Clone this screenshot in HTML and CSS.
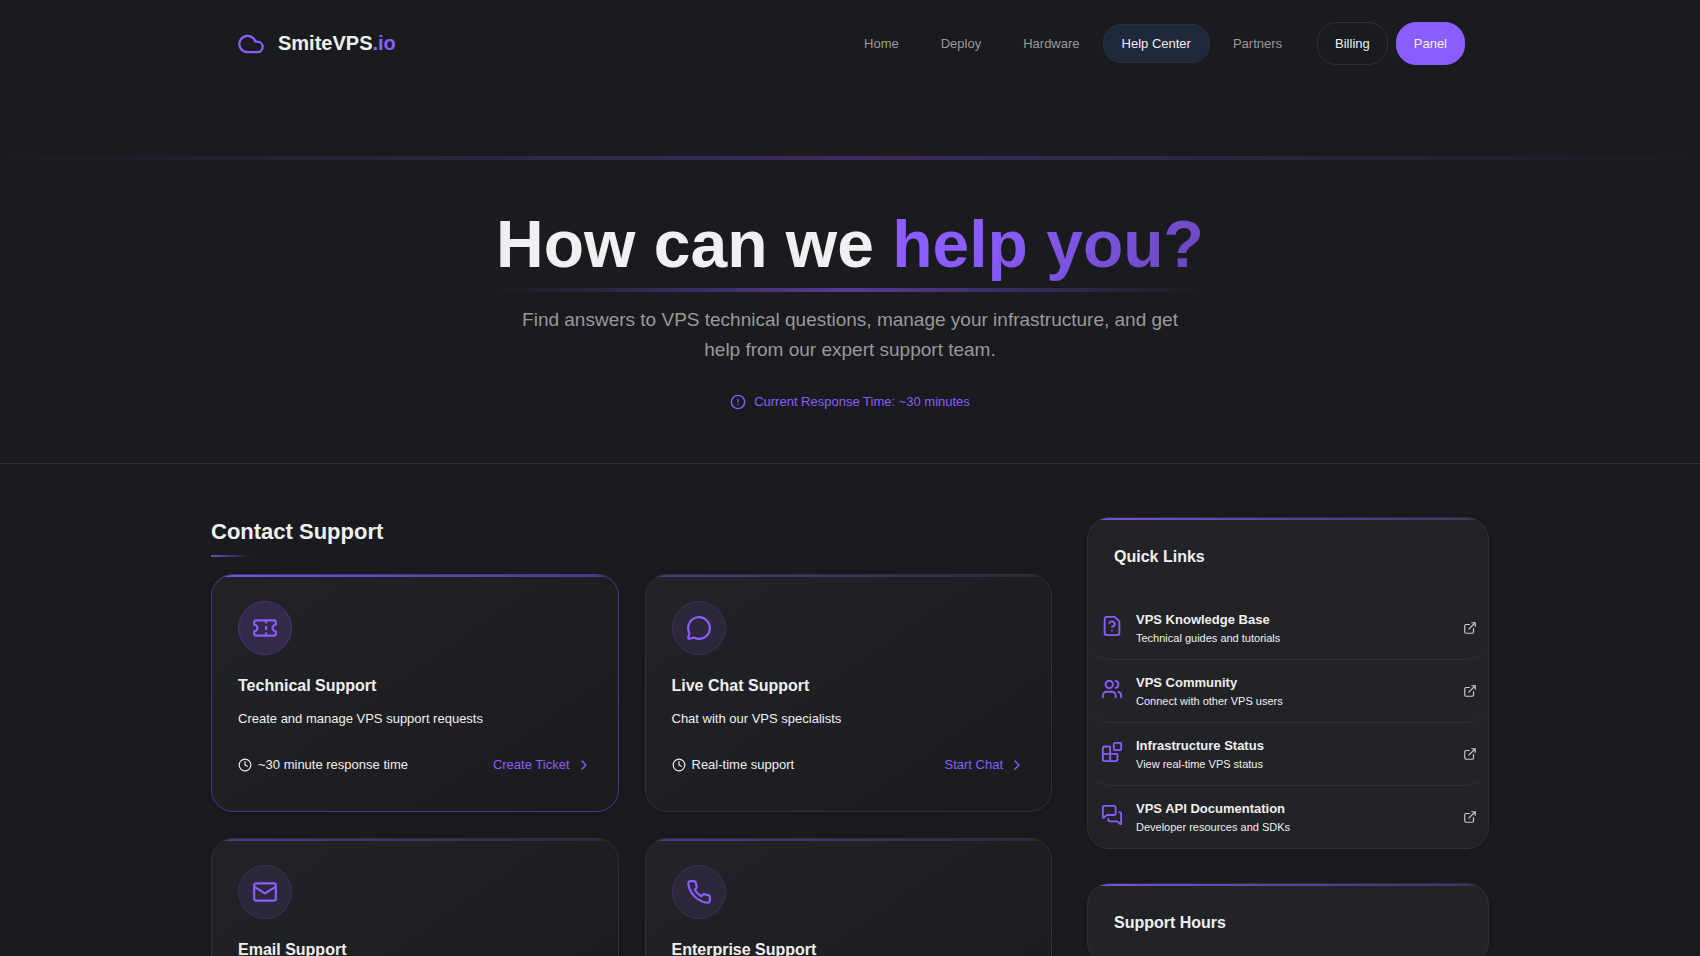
FILE: index.html
```html
<!DOCTYPE html>
<html lang="en">
<head>
    <meta charset="UTF-8">
    <meta name="viewport" content="width=device-width, initial-scale=1">
    <title>Help Center - SmiteVPS.io</title>
    <link rel="stylesheet" href="styles.css">
</head>
<body>
<header class="header">
    <div class="container header-inner">
        <a class="logo" href="#">
            <svg class="icon logo-icon" viewBox="0 0 24 24"><path d="M17.5 19H9a7 7 0 1 1 6.71-9h1.79a4.5 4.5 0 1 1 0 9Z"/></svg>
            <span>SmiteVPS<span class="accent">.io</span></span>
        </a>
        <nav class="nav">
            <a href="#">Home</a>
            <a href="#">Deploy</a>
            <a href="#">Hardware</a>
            <a class="active" href="#">Help Center</a>
            <a href="#">Partners</a>
        </nav>
        <div class="header-buttons">
            <a class="btn" href="#">Billing</a>
            <a class="btn btn-primary" href="#">Panel</a>
        </div>
    </div>
</header>

<section class="hero">
    <h1>How can we <span class="gradient-text">help you?</span></h1>
    <p class="hero-text">Find answers to VPS technical questions, manage your infrastructure, and get help from our expert support team.</p>
    <div class="response">
        <svg class="icon" viewBox="0 0 24 24"><circle cx="12" cy="12" r="10"/><path d="M12 8v4M12 16h.01"/></svg>
        <span>Current Response Time: ~30 minutes</span>
    </div>
</section>

<main class="container content">
    <section class="contact">
        <h2>Contact Support</h2>
        <div class="cards">
            <article class="card featured">
                <div class="card-icon">
                    <svg class="icon" viewBox="0 0 24 24"><path d="M2 9a3 3 0 0 1 0 6v2a2 2 0 0 0 2 2h16a2 2 0 0 0 2-2v-2a3 3 0 0 1 0-6V7a2 2 0 0 0-2-2H4a2 2 0 0 0-2 2ZM13 5v2M13 17v2M13 11v2"/></svg>
                </div>
                <h3>Technical Support</h3>
                <p>Create and manage VPS support requests</p>
                <div class="card-footer">
                    <span class="time">
                        <svg class="icon" viewBox="0 0 24 24"><circle cx="12" cy="12" r="10"/><path d="M12 6v6l4 2"/></svg>
                        ~30 minute response time
                    </span>
                    <a class="action" href="#">Create Ticket
                        <svg class="icon" viewBox="0 0 24 24"><path d="m9 18 6-6-6-6"/></svg>
                    </a>
                </div>
            </article>
            <article class="card">
                <div class="card-icon">
                    <svg class="icon" viewBox="0 0 24 24"><path d="M2.992 16.342a2 2 0 0 1 .094 1.167l-1.065 3.29a1 1 0 0 0 1.236 1.168l3.413-.998a2 2 0 0 1 1.099.092 10 10 0 1 0-4.777-4.719"/></svg>
                </div>
                <h3>Live Chat Support</h3>
                <p>Chat with our VPS specialists</p>
                <div class="card-footer">
                    <span class="time">
                        <svg class="icon" viewBox="0 0 24 24"><circle cx="12" cy="12" r="10"/><path d="M12 6v6l4 2"/></svg>
                        Real-time support
                    </span>
                    <a class="action" href="#">Start Chat
                        <svg class="icon" viewBox="0 0 24 24"><path d="m9 18 6-6-6-6"/></svg>
                    </a>
                </div>
            </article>
            <article class="card">
                <div class="card-icon">
                    <svg class="icon" viewBox="0 0 24 24"><rect x="2" y="4" width="20" height="16" rx="2"/><path d="m22 7-8.97 5.7a1.94 1.94 0 0 1-2.06 0L2 7"/></svg>
                </div>
                <h3>Email Support</h3>
            </article>
            <article class="card">
                <div class="card-icon">
                    <svg class="icon" viewBox="0 0 24 24"><path d="M22 16.92v3a2 2 0 0 1-2.18 2 19.79 19.79 0 0 1-8.63-3.07 19.5 19.5 0 0 1-6-6 19.79 19.79 0 0 1-3.07-8.67A2 2 0 0 1 4.11 2h3a2 2 0 0 1 2 1.72 12.84 12.84 0 0 0 .7 2.81 2 2 0 0 1-.45 2.11L8.09 9.91a16 16 0 0 0 6 6l1.27-1.27a2 2 0 0 1 2.11-.45 12.84 12.84 0 0 0 2.81.7A2 2 0 0 1 22 16.92z"/></svg>
                </div>
                <h3>Enterprise Support</h3>
            </article>
        </div>
    </section>

    <aside class="sidebar">
        <section class="panel">
            <h3>Quick Links</h3>
            <ul class="links">
                <li><a href="#">
                    <svg class="icon link-icon" viewBox="0 0 24 24"><path d="M15 2H6a2 2 0 0 0-2 2v16a2 2 0 0 0 2 2h12a2 2 0 0 0 2-2V7ZM9.1 9a3 3 0 0 1 5.82 1c0 2-3 3-3 3M12 17h.01"/></svg>
                    <span class="link-text"><strong>VPS Knowledge Base</strong><small>Technical guides and tutorials</small></span>
                    <svg class="icon external" viewBox="0 0 24 24"><path d="M15 3h6v6M10 14 21 3M18 13v6a2 2 0 0 1-2 2H5a2 2 0 0 1-2-2V8a2 2 0 0 1 2-2h6"/></svg>
                </a></li>
                <li><a href="#">
                    <svg class="icon link-icon" viewBox="0 0 24 24"><path d="M16 21v-2a4 4 0 0 0-4-4H6a4 4 0 0 0-4 4v2M22 21v-2a4 4 0 0 0-3-3.87M16 3.13a4 4 0 0 1 0 7.75"/><circle cx="9" cy="7" r="4"/></svg>
                    <span class="link-text"><strong>VPS Community</strong><small>Connect with other VPS users</small></span>
                    <svg class="icon external" viewBox="0 0 24 24"><path d="M15 3h6v6M10 14 21 3M18 13v6a2 2 0 0 1-2 2H5a2 2 0 0 1-2-2V8a2 2 0 0 1 2-2h6"/></svg>
                </a></li>
                <li><a href="#">
                    <svg class="icon link-icon" viewBox="0 0 24 24"><rect x="14" y="2" width="8" height="8" rx="1"/><path d="M10 22V7a1 1 0 0 0-1-1H4a2 2 0 0 0-2 2v12a2 2 0 0 0 2 2h12a2 2 0 0 0 2-2v-5a1 1 0 0 0-1-1H2"/></svg>
                    <span class="link-text"><strong>Infrastructure Status</strong><small>View real-time VPS status</small></span>
                    <svg class="icon external" viewBox="0 0 24 24"><path d="M15 3h6v6M10 14 21 3M18 13v6a2 2 0 0 1-2 2H5a2 2 0 0 1-2-2V8a2 2 0 0 1 2-2h6"/></svg>
                </a></li>
                <li><a href="#">
                    <svg class="icon link-icon" viewBox="0 0 24 24"><path d="M16 10a2 2 0 0 1-2 2H6.828a2 2 0 0 0-1.414.586l-2.202 2.202A.71.71 0 0 1 2 14.286V4a2 2 0 0 1 2-2h10a2 2 0 0 1 2 2zM20 9a2 2 0 0 1 2 2v10.286a.71.71 0 0 1-1.212.502l-2.202-2.202A2 2 0 0 0 17.172 19H10a2 2 0 0 1-2-2v-1"/></svg>
                    <span class="link-text"><strong>VPS API Documentation</strong><small>Developer resources and SDKs</small></span>
                    <svg class="icon external" viewBox="0 0 24 24"><path d="M15 3h6v6M10 14 21 3M18 13v6a2 2 0 0 1-2 2H5a2 2 0 0 1-2-2V8a2 2 0 0 1 2-2h6"/></svg>
                </a></li>
            </ul>
        </section>
        <section class="panel">
            <h3>Support Hours</h3>
        </section>
    </aside>
</main>
</body>
</html>
```
FILE: styles.css
```css
* {
    margin: 0;
    padding: 0;
    box-sizing: border-box;
}
html {
    scrollbar-width: none;
}
body {
    background: #1a1b1e;
    color: #f0f0f0;
    font-family: "Liberation Sans", Arial, sans-serif;
    font-size: 13px;
    line-height: 22px;
}
a {
    color: inherit;
    text-decoration: none;
}
ul {
    list-style: none;
}
.icon {
    width: 16px;
    height: 16px;
    flex: none;
    fill: none;
    stroke: currentColor;
    stroke-width: 2;
    stroke-linecap: round;
    stroke-linejoin: round;
}
.accent {
    color: #8b5cff;
}
.container {
    max-width: 1278px;
    margin: 0 auto;
}

/* header */
.header {
    height: 156px;
    padding-top: 22px;
    line-height: 21px;
}
.header-inner {
    display: flex;
    align-items: center;
    padding: 0 24px 0 26px;
}
.logo {
    display: flex;
    align-items: center;
    gap: 13px;
    margin-right: auto;
    font-size: 20px;
    font-weight: bold;
}
.logo-icon {
    width: 28px;
    height: 28px;
    color: #8b5cff;
}
.nav {
    display: flex;
    gap: 4px;
    color: #999;
}
.nav a {
    padding: 8px 18px;
    border: 1px solid transparent;
    border-radius: 18px;
}
.nav .active {
    background: #1e293b;
    border-color: #2e3036;
    color: #f0f0f0;
}
.header-buttons {
    display: flex;
    gap: 8px;
    margin-left: 16px;
}
.btn {
    padding: 10px 17px;
    border: 1px solid #2e3036;
    border-radius: 20px;
}
.btn-primary {
    background: #8b5cff;
    border-color: #8b5cff;
}

/* hero */
.hero {
    display: flex;
    flex-direction: column;
    align-items: center;
    padding-bottom: 50px;
    border-bottom: 1px solid #2e2f33;
    text-align: center;
}
.hero::before {
    content: "";
    width: 100%;
    height: 4px;
    margin-bottom: 44px;
    background: linear-gradient(90deg, transparent, #3c2c60, transparent);
}
.hero h1 {
    font-size: 66px;
    line-height: 80px;
}
.hero h1::after {
    content: "";
    display: block;
    height: 4px;
    margin-top: 4px;
    background: linear-gradient(90deg, transparent, #553c96, transparent);
}
.gradient-text {
    background: linear-gradient(135deg, #8b5cff 30%, #6845b8);
    -webkit-background-clip: text;
    background-clip: text;
    color: transparent;
}
.hero-text {
    max-width: 680px;
    margin: 13px 0 26px;
    color: #999;
    font-size: 19px;
    line-height: 30px;
}
.response {
    display: flex;
    align-items: center;
    gap: 8px;
    color: #8b5cff;
}

/* main content */
.content {
    display: grid;
    grid-template-columns: 1fr 402px;
    gap: 35px;
    padding: 53px 0;
}
.contact h2 {
    margin-bottom: 17px;
    font-size: 22px;
    line-height: 30px;
}
.contact h2::after {
    content: "";
    display: block;
    width: 40px;
    height: 2px;
    margin-top: 8px;
    background: linear-gradient(90deg, #6e4bc8, transparent);
}
.cards {
    display: grid;
    grid-template-columns: 1fr 1fr;
    gap: 26px;
}
.card,
.panel {
    position: relative;
    overflow: hidden;
    border: 1px solid #303136;
    border-radius: 22px;
    box-shadow: 0 2px 6px rgba(0, 0, 0, .2);
}
.card {
    min-height: 238px;
    padding: 26px;
    background: linear-gradient(145deg, #222326, #1a1b1e);
}
.card::before,
.panel::before {
    content: "";
    position: absolute;
    top: 0;
    left: 0;
    right: 0;
    height: 2px;
    background: linear-gradient(90deg, #7a52de, #3d3060);
}
.card::before {
    background: linear-gradient(90deg, #513a8c, #2c2839);
}
.featured {
    border-color: #4b3782;
}
.featured::before {
    background: linear-gradient(90deg, #7a52de, #4b3782);
}
.card-icon {
    display: flex;
    align-items: center;
    justify-content: center;
    width: 54px;
    height: 54px;
    margin-bottom: 18px;
    border: 1px solid #3c2f62;
    border-radius: 50%;
    background: #2c273b;
    color: #8b5cff;
}
.card-icon .icon {
    width: 26px;
    height: 26px;
}
.featured .card-icon {
    border-color: #48367a;
    background: #322a48;
}
.card h3,
.panel h3 {
    font-size: 16px;
    line-height: 26px;
}
.card p {
    margin: 9px 0 15px;
}
.card-footer {
    display: flex;
    align-items: center;
    justify-content: space-between;
    height: 40px;
}
.time,
.action {
    display: flex;
    align-items: center;
    gap: 6px;
}
.time .icon {
    width: 14px;
    height: 14px;
}
.action {
    color: #8b5cff;
}

/* sidebar */
.sidebar {
    display: flex;
    flex-direction: column;
    gap: 34px;
}
.panel {
    background: #222326;
}
.panel h3 {
    padding: 26px 26px 27px;
}
.links a {
    display: flex;
    align-items: center;
    gap: 13px;
    height: 63px;
    padding: 0 11px 0 13px;
    border-bottom: 1px solid #303136;
    border-radius: 22px;
}
.links li:last-child a {
    height: 62px;
    border-bottom: 0;
}
.link-icon {
    width: 22px;
    height: 22px;
    margin-bottom: 4px;
    color: #8b5cff;
}
.link-text {
    display: flex;
    flex: 1;
    flex-direction: column;
}
.link-text strong {
    line-height: 20px;
}
.link-text small {
    font-size: 11px;
    line-height: 16px;
}
.external {
    width: 14px;
    height: 14px;
    color: #ccc;
}
```
